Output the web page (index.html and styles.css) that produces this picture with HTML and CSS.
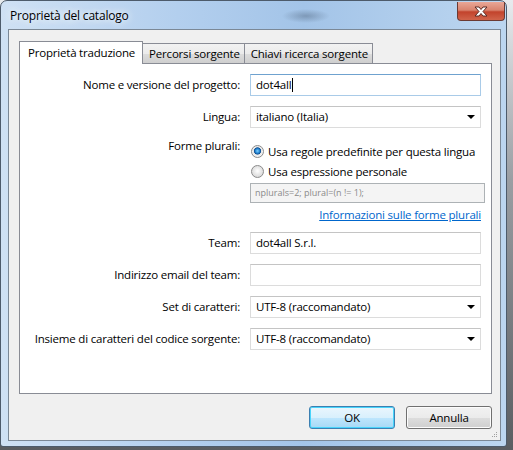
FILE: index.html
```html
<!DOCTYPE html>
<html lang="it">
<head>
    <meta charset="UTF-8" />
    <title>Proprietà del catalogo</title>
    <link rel="stylesheet" href="styles.css">
</head>
<body>

<div class="window">
    <div class="titlebar">
        <span class="title">Proprietà del catalogo</span>
        <div class="close-btn">
            <svg width="14" height="11" viewBox="0 0 14 11">
                <path d="M1 1 H5 L7 3.5 L9 1 H13 L9 5.5 L13 10 H9 L7 7.5 L5 10 H1 L5 5.5 Z" fill="#fff" stroke="#5b2a24" stroke-width="1" stroke-linejoin="round"/>
            </svg>
        </div>
    </div>

    <div class="client">
        <div class="tabs">
            <div class="tab active">Proprietà traduzione</div>
            <div class="tab">Percorsi sorgente</div>
            <div class="tab">Chiavi ricerca sorgente</div>
        </div>

        <div class="panel">
            <div class="form">
                <label class="lbl">Nome e versione del progetto:</label>
                <div class="field focused">dot4all<span class="caret"></span></div>

                <label class="lbl">Lingua:</label>
                <div class="field combo">italiano (Italia)<span class="arrow"></span></div>

                <label class="lbl top">Forme plurali:</label>
                <div class="plurals">
                    <div class="radio-row"><span class="radio checked"></span>Usa regole predefinite per questa lingua</div>
                    <div class="radio-row"><span class="radio"></span>Usa espressione personale</div>
                    <div class="expr">nplurals=2; plural=(n != 1);</div>
                    <div class="link-row"><a href="#" class="link">Informazioni sulle forme plurali</a></div>
                </div>

                <label class="lbl">Team:</label>
                <div class="field">dot4all S.r.l.</div>

                <label class="lbl">Indirizzo email del team:</label>
                <div class="field"></div>

                <label class="lbl">Set di caratteri:</label>
                <div class="field combo">UTF-8 (raccomandato)<span class="arrow"></span></div>

                <label class="lbl">Insieme di caratteri del codice sorgente:</label>
                <div class="field combo">UTF-8 (raccomandato)<span class="arrow"></span></div>
            </div>
        </div>

        <div class="buttons">
            <button class="btn default">OK</button>
            <button class="btn">Annulla</button>
        </div>
        <div class="grip">
            <svg width="6" height="6" viewBox="0 0 6 6">
                <rect x="4" y="0" width="1" height="1" fill="#a0a0a0"/>
                <rect x="2" y="2" width="1" height="1" fill="#a0a0a0"/>
                <rect x="4" y="2" width="1" height="1" fill="#a0a0a0"/>
                <rect x="0" y="4" width="1" height="1" fill="#a0a0a0"/>
                <rect x="2" y="4" width="1" height="1" fill="#a0a0a0"/>
                <rect x="4" y="4" width="1" height="1" fill="#a0a0a0"/>
            </svg>
        </div>
    </div>
</div>

</body>
</html>
```

FILE: styles.css
```css
html, body {
    margin: 0;
    padding: 0;
}

body {
    width: 513px;
    height: 450px;
    overflow: hidden;
    background: linear-gradient(to bottom, #e8ebee 0%, #9a9ea3 40%, #5a5d61 100%);
    font-family: "Open Sans", sans-serif;
    font-size: 11.5px;
    letter-spacing: -0.2px;
    color: #000;
}

.window {
    width: 505px;
    height: 445px;
    border: 1px solid #4d5b6b;
    border-radius: 7px 7px 3px 3px;
    background:
        radial-gradient(ellipse 24px 7px at 305px 15px, rgba(80, 100, 125, 0.45), rgba(80, 100, 125, 0) 100%),
        linear-gradient(to right, #cfe1f4 0%, #b3cfee 35%, #a3c4e8 60%, #bcd6f0 100%);
    display: flex;
    flex-direction: column;
}

.titlebar {
    height: 28px;
    display: flex;
    justify-content: space-between;
    align-items: flex-start;
}

.title {
    padding: 7px 0 0 9px;
    line-height: 16px;
    font-size: 12px;
    text-shadow: 0 0 6px #eef5fc, 0 0 10px #eef5fc;
}

.close-btn {
    width: 46px;
    height: 18px;
    border: 1px solid #6b3a33;
    border-top: none;
    border-radius: 0 0 4px 4px;
    background: linear-gradient(to bottom, #e9a797 0%, #d9846f 45%, #c2432c 55%, #d0644b 100%);
    display: flex;
    align-items: center;
    justify-content: center;
    margin: 1px 1px 0 0;
}

.client {
    margin-left: 7px;
    width: 491px;
    height: 410px;
    border: 1px solid #7b8896;
    background: #f0f0f0;
    display: flex;
    flex-direction: column;
}

.tabs {
    display: flex;
    align-items: flex-end;
    padding: 11px 0 0 10px;
    position: relative;
    z-index: 1;
}

.tab {
    height: 19px;
    line-height: 19px;
    padding: 0 4px 0 6px;
    border: 1px solid #898c95;
    border-bottom: none;
    margin-left: -1px;
    background: linear-gradient(to bottom, #f2f2f2 0%, #ebebeb 50%, #dddddd 51%, #cfcfcf 100%);
}

.tab:first-child {
    margin-left: 0;
}

.tab.active {
    height: 22px;
    line-height: 21px;
    padding: 0 7px 0 8px;
    margin-bottom: -1px;
    background: #fff;
}

.panel {
    height: 329px;
    margin: 0 8px 0 10px;
    border: 1px solid #898c95;
    background: #fff;
}

.form {
    display: grid;
    grid-template-columns: 208px 231px;
    column-gap: 10px;
    row-gap: 10px;
    padding: 10px 10px 0 12px;
    align-items: center;
}

.lbl {
    text-align: right;
    white-space: nowrap;
    line-height: 16px;
}

.lbl.top {
    align-self: start;
}

.field {
    height: 20px;
    line-height: 20px;
    padding: 0 5px;
    border: 1px solid #dcdcdc;
    border-top-color: #c4c4c4;
    background: #fff;
    display: flex;
    align-items: center;
}

.field.focused {
    border-color: #a9cbe8;
    border-top-color: #6fa2cf;
}

.caret {
    width: 1px;
    height: 14px;
    background: #000;
    margin-left: 1px;
}

.combo {
    justify-content: space-between;
}

.arrow {
    width: 0;
    height: 0;
    border-left: 4px solid transparent;
    border-right: 4px solid transparent;
    border-top: 4px solid #000;
}

.plurals {
    display: flex;
    flex-direction: column;
}

.radio-row {
    height: 20px;
    display: flex;
    align-items: center;
    white-space: nowrap;
}

.radio-row:first-child {
    margin-top: 3px;
}

.radio {
    width: 11px;
    height: 11px;
    margin: 0 4px 0 1px;
    border: 1px solid #8b8b8b;
    border-radius: 50%;
    background: radial-gradient(circle at 50% 45%, #ffffff 0%, #eaeaea 40%, #cfcfcf 100%);
}

.radio.checked {
    background: radial-gradient(circle at 50% 45%, #7fd0ff 0%, #2a8ad4 25%, #0d4f94 40%, #e4e4e4 48%, #f4f4f4 65%, #d4d4d4 100%);
}

.expr {
    height: 18px;
    line-height: 18px;
    margin: 2px -4px 0 0;
    padding: 0 4px;
    border: 1px solid #adb2b5;
    background: #f4f4f4;
    color: #8a8a8a;
    font-size: 9px;
    letter-spacing: 0;
}

.link-row {
    margin-top: 5px;
    line-height: 14px;
    text-align: right;
}

.link {
    color: #0066cc;
}

.buttons {
    display: flex;
    justify-content: flex-end;
    gap: 11px;
    margin-top: 12px;
    padding-right: 8px;
}

.btn {
    width: 86px;
    height: 23px;
    padding: 0;
    font-family: inherit;
    font-size: 11.5px;
    letter-spacing: -0.2px;
    color: #000;
    border: 1px solid #707070;
    border-radius: 3px;
    background: linear-gradient(to bottom, #f2f2f2 0%, #ebebeb 50%, #dddddd 51%, #cfcfcf 100%);
    box-shadow: inset 0 0 0 1px #fcfcfc;
}

.btn.default {
    border-color: #3c7fb1;
    background: linear-gradient(to bottom, #eaf6fd 0%, #d9f0fc 50%, #bee6fd 51%, #a7d9f5 100%);
    box-shadow: inset 0 0 0 1px #48d4fb;
}

.grip {
    align-self: flex-end;
    height: 6px;
    margin: 3px 2px 0 0;
    line-height: 0;
}
```
